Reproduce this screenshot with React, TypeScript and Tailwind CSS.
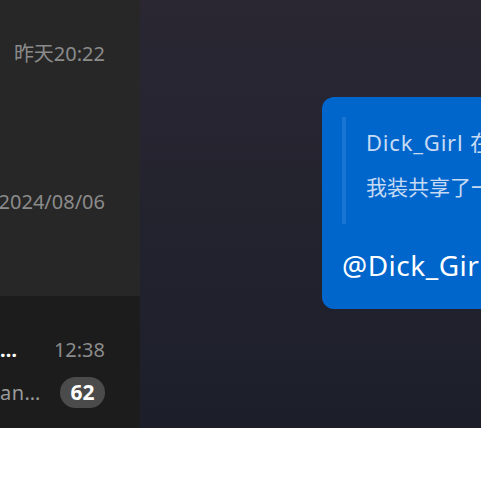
import React from "react";

// Chat list items: only the right-hand column of each row is in view
const chats = [
  { id: 1, time: "昨天20:22" },
  { id: 2, time: "2024/08/06" },
];

export default function App() {
  return (
    <div
      className="flex h-[428px] w-full overflow-hidden"
      style={{ fontFamily: '"Noto Sans", "Noto Sans CJK SC", sans-serif' }}
    >
      {/* Sidebar */}
      <aside className="flex w-[140px] shrink-0 flex-col bg-[#272727]">
        {chats.map((c) => (
          <div key={c.id} className="h-[148px] shrink-0 pr-[35px] pt-[40px]">
            <div className="flex justify-end text-[20px] leading-[28px] text-[#8b8b8b]">
              <span className="whitespace-nowrap">{c.time}</span>
            </div>
          </div>
        ))}
        <div className="flex-1 bg-[#1c1c1c] pr-[35px] pt-[39px]">
          <div className="flex items-center justify-between">
            <span className="text-[20px] font-bold leading-[30px] text-white">…</span>
            <span className="text-[20px] leading-[30px] text-[#8b8b8b]">12:38</span>
          </div>
          <div className="mt-[12px] flex items-center justify-between">
            <span className="text-[20px] leading-[30px] tracking-[0.5px] text-[#9a9a9a]">an…</span>
            <span className="flex h-[31px] min-w-[45px] items-center justify-center rounded-full bg-[#4b4b4b] px-2 text-[21px] font-bold text-white">
              62
            </span>
          </div>
        </div>
      </aside>

      {/* Conversation */}
      <main className="flex-1 overflow-hidden bg-gradient-to-b from-[#2a2733] to-[#1c1f2a] pl-[182px] pt-[97px]">
        <div className="w-[420px] rounded-[12px] bg-[#0066cc] pl-[20px] pt-[20px] pb-[26px]">
          <div className="border-l-4 border-[#1a74d2] pl-[20px] pt-[3px] pb-[14px] text-[#c6daf3]">
            <div className="h-[45px] whitespace-nowrap text-[22px] leading-[45px] tracking-[0.8px]">
              Dick_Girl 在群聊中说：
            </div>
            <div className="h-[45px] whitespace-nowrap text-[21px] leading-[45px]">我装共享了一个文件</div>
          </div>
          <div className="mt-[23px] whitespace-nowrap text-[28px] leading-[36px] tracking-[0.5px] text-white">
            @Dick_Girl 收到
          </div>
        </div>
      </main>
    </div>
  );
}
